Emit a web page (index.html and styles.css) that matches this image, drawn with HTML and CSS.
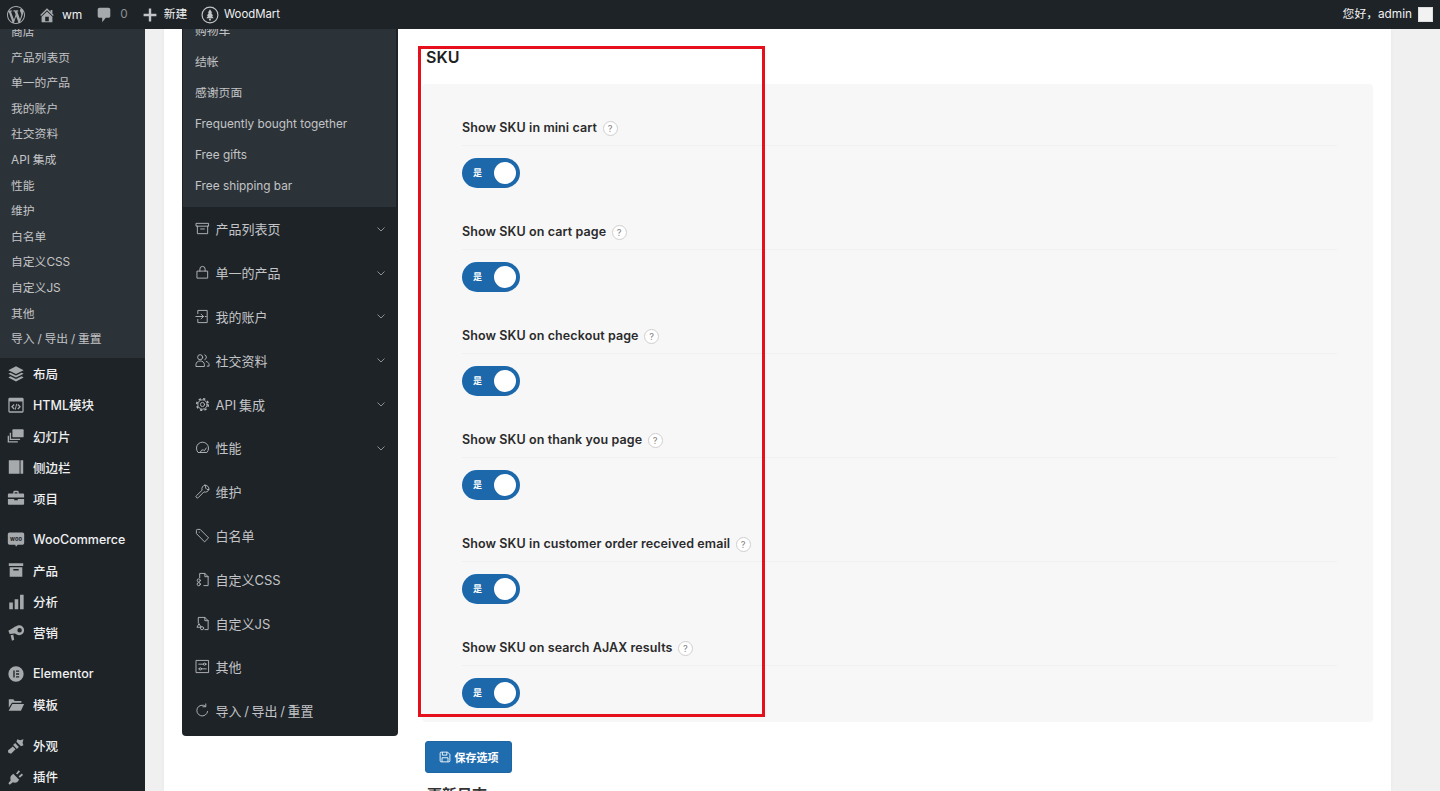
FILE: index.html
```html
<!DOCTYPE html>
<html lang="zh-CN">
<head>
<meta charset="utf-8">
<title>WoodMart</title>
<link rel="stylesheet" href="styles.css">
</head>
<body>
<svg class="sprite" aria-hidden="true">
  <symbol id="i-wp" viewBox="0 0 20 20"><path d="M20 10c0-5.51-4.49-10-10-10C4.48 0 0 4.49 0 10c0 5.52 4.48 10 10 10 5.51 0 10-4.48 10-10zM7.78 15.37L4.37 6.22c.55-.02 1.17-.08 1.17-.08.5-.06.44-1.13-.06-1.11 0 0-1.45.11-2.37.11-.18 0-.37 0-.58-.01C4.12 2.69 6.87 1.11 10 1.11c2.33 0 4.45.87 6.05 2.34-.68-.11-1.65.39-1.65 1.58 0 .74.45 1.36.9 2.1.35.61.55 1.36.55 2.46 0 1.49-1.4 5-1.4 5l-3.03-8.37c.54-.02.82-.17.82-.17.5-.05.44-1.25-.06-1.22 0 0-1.44.12-2.38.12-.87 0-2.33-.12-2.33-.12-.5-.03-.56 1.2-.06 1.22l.92.08 1.26 3.41zM17.41 10c.24-.64.74-1.87.43-4.25.7 1.29 1.05 2.71 1.05 4.25 0 3.29-1.73 6.24-4.4 7.78.97-2.59 1.94-5.2 2.92-7.78zM6.1 18.09C3.12 16.65 1.11 13.53 1.11 10c0-1.3.23-2.48.72-3.59C3.25 10.3 4.67 14.2 6.1 18.09zm4.03-6.63l2.58 6.98c-.86.29-1.76.45-2.71.45-.79 0-1.57-.11-2.29-.33.81-2.38 1.62-4.74 2.42-7.1z"/></symbol>
  <symbol id="i-home" viewBox="0 0 20 20"><path d="M16 8.5l1.53 1.53-1.06 1.06L10 4.62l-6.47 6.47-1.06-1.06L10 2.5l4 4v-2h2v4zm-6-2.46l6 5.99V18H4v-5.97zM12 17v-5H8v5h4z"/></symbol>
  <symbol id="i-comment" viewBox="0 0 20 20"><path d="M5 2h10c1.1 0 2 .9 2 2v7c0 1.1-.9 2-2 2h-3l-4 5v-5H5c-1.1 0-2-.9-2-2V4c0-1.1.9-2 2-2z"/></symbol>
  <symbol id="i-plus" viewBox="0 0 20 20"><path d="M18 8.5v3h-6.5V18h-3v-6.5H2v-3h6.5V2h3v6.5z"/></symbol>
  <symbol id="i-wm" viewBox="0 0 20 20"><circle cx="10" cy="10" r="8.8" fill="none" stroke="currentColor" stroke-width="1.3"/><path d="M10 3.6l2.5 3.9h-1.3l2.4 3.4h-1.5l2 2.8H5.9l2-2.8H6.4l2.4-3.4H7.5zM9 14.2h2v2H9z"/></symbol>
  <symbol id="i-layers" viewBox="0 0 20 20"><path d="M10 1.5l8.5 4.3L10 10 1.5 5.8z"/><path d="M3.8 8.500L10 11.600l6.200-3.100 2.300 1.300L10 14 1.500 9.800z"/><path d="M3.8 12.500L10 15.600l6.200-3.100 2.300 1.300L10 18.200l-8.500-4.400z"/></symbol>
  <symbol id="i-html" viewBox="0 0 20 20"><path fill-rule="evenodd" d="M3 2h14a1.500 1.500 0 0 1 1.500 1.500V17a1.500 1.500 0 0 1-1.500 1.500H3A1.500 1.500 0 0 1 1.500 17V3.500A1.500 1.500 0 0 1 3 2zm-.1 4v11h14.200V6zM7.500 9l1 1-2 2 2 2-1 1-3-3zm5 0l3 3-3 3-1-1 2-2-2-2zM10.300 8.700l1 .3-1.700 6.300-1-.3z"/></symbol>
  <symbol id="i-slides" viewBox="0 0 20 20"><path d="M7 2.500h10.500a1 1 0 0 1 1 1v7a1 1 0 0 1-1 1H7a1 1 0 0 1-1-1v-7a1 1 0 0 1 1-1z"/><path fill="none" stroke="currentColor" stroke-width="1.500" d="M3.800 6.500v7.200h10.700M1.500 9.800v6.700h10.500"/></symbol>
  <symbol id="i-sidebar" viewBox="0 0 20 20"><path d="M2 2.500h12v15H2zM15 2.500h3v15h-3z"/></symbol>
  <symbol id="i-case" viewBox="0 0 20 20"><path d="M7 5V3.500A1.500 1.500 0 0 1 8.500 2h3A1.500 1.500 0 0 1 13 3.500V5h5a1 1 0 0 1 1 1v3.500H1V6a1 1 0 0 1 1-1zm1.500 0h3V3.500h-3zM1 11h7v1.500h4V11h7v5.500a1 1 0 0 1-1 1H2a1 1 0 0 1-1-1z"/></symbol>
  <symbol id="i-woo" viewBox="0 0 22 22"><path d="M3 3h16a2 2 0 0 1 2 2v11a2 2 0 0 1-2 2h-6l-2 2.500L10 18H3a2 2 0 0 1-2-2V5a2 2 0 0 1 2-2z"/><text x="11" y="13" text-anchor="middle" class="woo-text">woo</text></symbol>
  <symbol id="i-box" viewBox="0 0 20 20"><path d="M2 2.500h16v3H2zM3 7h14v10.500H3zm4 2v1.500h6V9z" fill-rule="evenodd"/></symbol>
  <symbol id="i-chart" viewBox="0 0 20 20"><path d="M2.500 10.500h4V18h-4zM8.500 7h4v11h-4zM14.500 2h4v16h-4z"/></symbol>
  <symbol id="i-mega" viewBox="0 0 20 20"><path fill-rule="evenodd" d="M13.500 1.500a5.500 5.500 0 1 1 0 11c-.5 0-5-2-5-2L3 11l-1.500-3.500L8 3.500s4-2 5.500-2zm.5 3a2 2 0 1 0 0 5 2 2 0 0 0 0-5zM4 12.500l3-.5 1 5.500-2.500 1z"/></symbol>
  <symbol id="i-el" viewBox="0 0 20 20"><path fill-rule="evenodd" d="M10 1.500a8.500 8.500 0 1 1 0 17 8.500 8.500 0 0 1 0-17zM7 6v8h1.500V6zm3 0v1.500h3.500V6zm0 3.250v1.500h3.500v-1.500zM10 12.500V14h3.500v-1.500z"/></symbol>
  <symbol id="i-folder" viewBox="0 0 20 20"><path d="M2 3.500h5l1.500 2H16v2H5.500L2 13z"/><path d="M6 8.800h13l-3.500 7.700H1.800z"/></symbol>
  <symbol id="i-brush" viewBox="0 0 20 20"><path d="M11.500 2.500l3 1 3.800-1-1 3.800 1 3-2.800 1-5-5z"/><path d="M9 6.800l4.200 4.200-2.200 2.200-4.200-4.200z"/><path d="M6.500 10.500l3 3-5 5-3-1-.5-2.500z"/></symbol>
  <symbol id="i-plug" viewBox="0 0 20 20"><path d="M7 6.500l6.500 6.500-2 2.500c-1.500 1-3.500 1-5 .3L3 18.500 1.500 17l2.700-3.500c-.7-1.500-.7-3.500.3-5z"/><path d="M10 6l3-3.500 1.500 1.300L11.500 7.300zM13 9.200l3.500-3 1.300 1.500L14.300 10.700z"/></symbol>
  <symbol id="n-archive" viewBox="0 0 16 16"><path d="M1.500 2.500h13v3h-13zM2.500 5.500v8h11v-8M6 8.500h4"/></symbol>
  <symbol id="n-bag" viewBox="0 0 16 16"><path d="M2.500 6.500h11v7.500h-11zM5.200 6.500V4.300a2.800 2.800 0 0 1 5.600 0v2.200"/></symbol>
  <symbol id="n-login" viewBox="0 0 16 16"><path d="M3 5V1.500h10v13H3V11M1 8h8M6.500 5.500L9 8l-2.500 2.500M11 8h1"/></symbol>
  <symbol id="n-users" viewBox="0 0 16 16"><circle cx="5.500" cy="4.500" r="2.700"/><path d="M1 14v-1.500c0-2.500 2-4 4.500-4s4.500 1.500 4.500 4V14zM10.500 2a2.700 2.700 0 0 1 0 5M12 9c1.800.5 3 1.800 3 3.500V14h-2"/></symbol>
  <symbol id="n-gear" viewBox="0 0 16 16"><circle cx="8" cy="8" r="5"/><circle class="teeth" cx="8" cy="8" r="6.200"/><circle cx="8" cy="8" r="2.200"/></symbol>
  <symbol id="n-gauge" viewBox="0 0 16 16"><path d="M3 13a6.500 6.500 0 1 1 10 0zM6 13a2.200 2.200 0 0 1 4-1.500l2-3"/></symbol>
  <symbol id="n-wrench" viewBox="0 0 16 16"><path d="M10.500 1.200a4 4 0 0 1 4.300 4.800l-2-.2-1.500-1.500.1-2zM10.500 1.200A4 4 0 0 0 7.600 6.600L1.500 12.500a1.400 1.400 0 0 0 2 2L9.500 8.400a4 4 0 0 0 5.300-2.400"/></symbol>
  <symbol id="n-tag" viewBox="0 0 16 16"><path d="M1.500 5.500V2.500a1 1 0 0 1 1-1h3l9 9-4 4zM4.500 4.500h.1"/></symbol>
  <symbol id="n-filecss" viewBox="0 0 16 16"><path d="M5 6V1.500h5.500l3.500 3.500v9.500H9.500M10.500 1.500V5H14"/><circle cx="4" cy="9" r="1.700"/><circle cx="4" cy="13" r="1.700"/></symbol>
  <symbol id="n-filejs" viewBox="0 0 16 16"><path d="M3.500 7.500v-6h7l3.500 3.500v9.500h-3.500M10.500 1.500V5H14"/><path d="M4.500 8.500l2 3.500h-4z"/><circle cx="7.500" cy="13" r="1.700"/></symbol>
  <symbol id="n-sliders" viewBox="0 0 16 16"><path d="M1.500 1.500h13v13h-13zM4 5.500h5M11.500 5.500H12M4 10.500h.5M7 10.500h5"/><circle cx="10.200" cy="5.500" r="1.200"/><circle cx="5.700" cy="10.500" r="1.200"/></symbol>
  <symbol id="n-reload" viewBox="0 0 16 16"><path d="M13.500 9a5.800 5.800 0 1 1-2.500-5.800M11.500 1v3h-3"/></symbol>
  <symbol id="n-save" viewBox="0 0 16 16"><path d="M1.500 3a1.500 1.500 0 0 1 1.500-1.500h8.500l3 3V13a1.500 1.500 0 0 1-1.500 1.500H3A1.500 1.500 0 0 1 1.500 13zM4.500 1.500v4h6v-4M4 14.500V9h8v5.500"/></symbol>
  <symbol id="n-chevron" viewBox="0 0 10 10"><path d="M1.500 3.500L5 7l3.500-3.500"/></symbol>
</svg>

<header class="adminbar">
  <svg class="ab-logo"><use href="#i-wp"/></svg>
  <svg class="ab-ic ab-home"><use href="#i-home"/></svg>
  <span class="ab-text ab-site">wm</span>
  <svg class="ab-ic ab-comment"><use href="#i-comment"/></svg>
  <span class="ab-text ab-count">0</span>
  <svg class="ab-ic ab-plus"><use href="#i-plus"/></svg>
  <span class="ab-text ab-new">新建</span>
  <svg class="ab-ic ab-wm"><use href="#i-wm"/></svg>
  <span class="ab-text ab-wmtext">WoodMart</span>
  <span class="ab-text ab-hello">您好，admin</span>
  <span class="ab-avatar"></span>
</header>

<div class="layout">
  <aside class="sidebar">
    <ul class="side-sub">
      <li>商店</li><li>产品列表页</li><li>单一的产品</li><li>我的账户</li><li>社交资料</li><li>API 集成</li><li>性能</li><li>维护</li><li>白名单</li><li>自定义CSS</li><li>自定义JS</li><li>其他</li><li>导入 / 导出 / 重置</li>
    </ul>
    <ul class="side-group">
      <li><svg><use href="#i-layers"/></svg>布局</li>
      <li><svg><use href="#i-html"/></svg>HTML模块</li>
      <li><svg><use href="#i-slides"/></svg>幻灯片</li>
      <li><svg><use href="#i-sidebar"/></svg>侧边栏</li>
      <li><svg><use href="#i-case"/></svg>项目</li>
    </ul>
    <ul class="side-group">
      <li><svg><use href="#i-woo"/></svg>WooCommerce</li>
      <li><svg><use href="#i-box"/></svg>产品</li>
      <li><svg><use href="#i-chart"/></svg>分析</li>
      <li><svg><use href="#i-mega"/></svg>营销</li>
    </ul>
    <ul class="side-group">
      <li><svg><use href="#i-el"/></svg>Elementor</li>
      <li><svg><use href="#i-folder"/></svg>模板</li>
    </ul>
    <ul class="side-group">
      <li><svg><use href="#i-brush"/></svg>外观</li>
      <li><svg><use href="#i-plug"/></svg>插件</li>
    </ul>
  </aside>

  <main class="main">
    <div class="card">
      <nav class="opt-nav">
        <ul class="opt-sub">
          <li>购物车</li><li>结帐</li><li>感谢页面</li><li>Frequently bought together</li><li>Free gifts</li><li>Free shipping bar</li>
        </ul>
        <ul class="opt-list">
          <li><svg class="n-ic"><use href="#n-archive"/></svg><span>产品列表页</span><svg class="n-chev"><use href="#n-chevron"/></svg></li>
          <li><svg class="n-ic"><use href="#n-bag"/></svg><span>单一的产品</span><svg class="n-chev"><use href="#n-chevron"/></svg></li>
          <li><svg class="n-ic"><use href="#n-login"/></svg><span>我的账户</span><svg class="n-chev"><use href="#n-chevron"/></svg></li>
          <li><svg class="n-ic"><use href="#n-users"/></svg><span>社交资料</span><svg class="n-chev"><use href="#n-chevron"/></svg></li>
          <li><svg class="n-ic"><use href="#n-gear"/></svg><span>API 集成</span><svg class="n-chev"><use href="#n-chevron"/></svg></li>
          <li><svg class="n-ic"><use href="#n-gauge"/></svg><span>性能</span><svg class="n-chev"><use href="#n-chevron"/></svg></li>
          <li><svg class="n-ic"><use href="#n-wrench"/></svg><span>维护</span></li>
          <li><svg class="n-ic"><use href="#n-tag"/></svg><span>白名单</span></li>
          <li><svg class="n-ic"><use href="#n-filecss"/></svg><span>自定义CSS</span></li>
          <li><svg class="n-ic"><use href="#n-filejs"/></svg><span>自定义JS</span></li>
          <li><svg class="n-ic"><use href="#n-sliders"/></svg><span>其他</span></li>
          <li><svg class="n-ic"><use href="#n-reload"/></svg><span>导入 / 导出 / 重置</span></li>
        </ul>
      </nav>

      <section class="content">
        <h2 class="sec-title">SKU</h2>
        <div class="panel">
          <div class="opt"><div class="opt-label">Show SKU in mini cart<span class="help">?</span></div><div class="toggle"><span>是</span><i></i></div></div>
          <div class="opt"><div class="opt-label">Show SKU on cart page<span class="help">?</span></div><div class="toggle"><span>是</span><i></i></div></div>
          <div class="opt"><div class="opt-label">Show SKU on checkout page<span class="help">?</span></div><div class="toggle"><span>是</span><i></i></div></div>
          <div class="opt"><div class="opt-label">Show SKU on thank you page<span class="help">?</span></div><div class="toggle"><span>是</span><i></i></div></div>
          <div class="opt"><div class="opt-label">Show SKU in customer order received email<span class="help">?</span></div><div class="toggle"><span>是</span><i></i></div></div>
          <div class="opt"><div class="opt-label">Show SKU on search AJAX results<span class="help">?</span></div><div class="toggle"><span>是</span><i></i></div></div>
        </div>
        <button class="save"><svg><use href="#n-save"/></svg>保存选项</button>
        <h2 class="sec-next">更新日志</h2>
        <div class="highlight"></div>
      </section>
    </div>
  </main>
</div>
</body>
</html>
```
FILE: styles.css
```css
* { box-sizing: border-box; }
html, body { margin: 0; height: 791px; overflow: hidden; }
body {
  background: #f0f0f1;
  color: #242424;
  font-family: Inter, "Noto Sans CJK SC", sans-serif;
  display: flex;
  flex-direction: column;
}
ul { list-style: none; margin: 0; padding: 0; }
.sprite { display: none; }

/* admin bar */
.adminbar {
  height: 29px;
  flex: none;
  background: #1d2327;
  display: flex;
  align-items: center;
  color: #f0f0f1;
  padding: 0 7px;
  position: relative;
  z-index: 2;
}
.ab-logo { width: 18px; height: 18px; fill: #a7aaad; }
.ab-ic { width: 18px; height: 18px; flex: none; fill: #a7aaad; color: #a7aaad; }
.ab-text { font-size: 11.8px; line-height: 29px; white-space: nowrap; }
.ab-home { margin-left: 13px; }
.ab-site { margin-left: 6px; font-size: 12px; }
.ab-comment { margin-left: 13px; }
.ab-count { margin-left: 7px; color: #8c8f94; }
.ab-plus { width: 16px; height: 16px; margin-left: 14px; fill: #c3c4c7; }
.ab-new { margin-left: 6px; }
.ab-wm { margin-left: 13.500px; fill: #c3c4c7; color: #c3c4c7; }
.ab-wmtext { margin-left: 5px; font-size: 11.400px; }
.ab-hello { margin-left: auto; }
.ab-avatar {
  width: 15px;
  height: 15px;
  margin-left: 6px;
  background: #f2f2f2;
  border: 1px solid #ddd;
}

/* layout */
.layout { flex: 1; display: flex; min-height: 0; overflow: hidden; }

/* WP sidebar */
.sidebar { width: 145px; flex: none; background: #1d2327; }
.side-sub {
  margin-top: -9px;
  padding-bottom: 5.600px;
  background: #2c3338;
}
.side-sub li {
  height: 25.600px;
  line-height: 25.600px;
  padding-left: 11px;
  font-size: 11.800px;
  word-spacing: -.5px;
  color: #c3c4c7;
  white-space: nowrap;
}
.side-group { margin-bottom: 10px; }
.side-group li {
  height: 31.100px;
  display: flex;
  align-items: center;
  gap: 8px;
  padding-left: 7px;
  font-size: 12.500px;
  font-weight: 500;
  color: #f0f0f1;
  white-space: nowrap;
}
.side-group svg { width: 18px; height: 18px; flex: none; fill: #a7aaad; color: #a7aaad; }
.woo-text { font: 700 7px Inter, sans-serif; fill: #1d2327; }

/* card */
.main { flex: 1; min-width: 0; padding: 0 49px 0 19px; }
.card {
  height: 100%;
  background: #fff;
  display: flex;
  padding: 0 18px;
  box-shadow: 0 0 4px rgba(0, 0, 0, .04);
}

/* options nav */
.opt-nav {
  width: 216px;
  flex: none;
  height: 707px;
  background: #1d2327;
  border-radius: 0 0 4px 4px;
  overflow: hidden;
}
.opt-sub {
  height: 178px;
  margin: 0 2px 0 1px;
  padding-left: 12px;
  background: #2c3338;
  overflow: hidden;
}
.opt-sub li {
  height: 31px;
  line-height: 31px;
  font-size: 11.800px;
  color: #c3c4c7;
  white-space: nowrap;
  position: relative;
  top: -13.500px;
}
.opt-list li {
  height: 43.800px;
  display: flex;
  align-items: center;
  padding: 0 12px 0 13px;
  font-size: 13px;
  color: #c3c4c7;
}
.opt-list span { margin-left: 5.500px; flex: 1; white-space: nowrap; word-spacing: -1px; }
.n-ic {
  width: 15px;
  height: 15px;
  flex: none;
  fill: none;
  stroke: #b5b8bb;
  stroke-width: 1;
  stroke-linejoin: round;
  stroke-linecap: round;
}
.teeth { stroke-width: 1.600; stroke-dasharray: 2.430 2.430; stroke-linecap: butt; }
.n-chev {
  width: 10px;
  height: 10px;
  flex: none;
  fill: none;
  stroke: #8c8f94;
  stroke-width: 1;
}

/* content */
.content { flex: 1; min-width: 0; margin-left: 24px; position: relative; }
.sec-title {
  margin: 0;
  height: 55px;
  padding: 18px 0 0 4px;
  font-size: 16px;
  line-height: 20px;
  font-weight: 600;
  color: #1f1f1f;
}
.panel {
  height: 638px;
  padding: 33px 36px 14px 40px;
  background: #f7f7f8;
  border-radius: 4px;
}
.opt { margin-bottom: 33px; }
.opt-label {
  height: 29px;
  padding-bottom: 6px;
  line-height: 20px;
  font-size: 12.500px;
  letter-spacing: .1px;
  font-weight: 600;
  color: #2b2b2b;
  border-bottom: 1px solid #f0f0f1;
  display: flex;
  align-items: center;
  white-space: nowrap;
}
.help {
  width: 15px;
  height: 15px;
  margin-left: 5.500px;
  border: 1px solid #cfcfcf;
  border-radius: 50%;
  font-size: 9px;
  font-weight: 500;
  line-height: 13px;
  text-align: center;
  color: #8a8a8a;
  background: #fff;
}
.toggle {
  width: 58px;
  height: 30px;
  margin-top: 12px;
  padding: 0 4px 0 11px;
  border-radius: 15px;
  background: #1c68ab;
  color: #fff;
  font-size: 9px;
  font-weight: 700;
  display: flex;
  align-items: center;
  justify-content: space-between;
}
.toggle span { position: relative; top: -1px; }
.toggle i {
  width: 22px;
  height: 22px;
  border-radius: 50%;
  background: #fff;
}
.save {
  margin: 19px 0 0 3px;
  width: 87px;
  height: 32px;
  padding: 0;
  border: 1px solid #1d66a5;
  border-radius: 3px;
  background: #1f6dae;
  color: #fff;
  font: 700 11px Inter, "Noto Sans CJK SC", sans-serif;
  display: flex;
  align-items: center;
  justify-content: center;
  gap: 4px;
}
.save svg { width: 12px; height: 12px; fill: none; stroke: #fff; stroke-width: 1.200; }
.sec-next {
  margin: 11.500px 0 0 5px;
  font-size: 15px;
  line-height: 20px;
  font-weight: 600;
  color: #333;
}
.highlight {
  position: absolute;
  left: -4px;
  top: 17px;
  width: 347px;
  height: 671px;
  border: 3px solid #e60f1c;
  pointer-events: none;
}
```
